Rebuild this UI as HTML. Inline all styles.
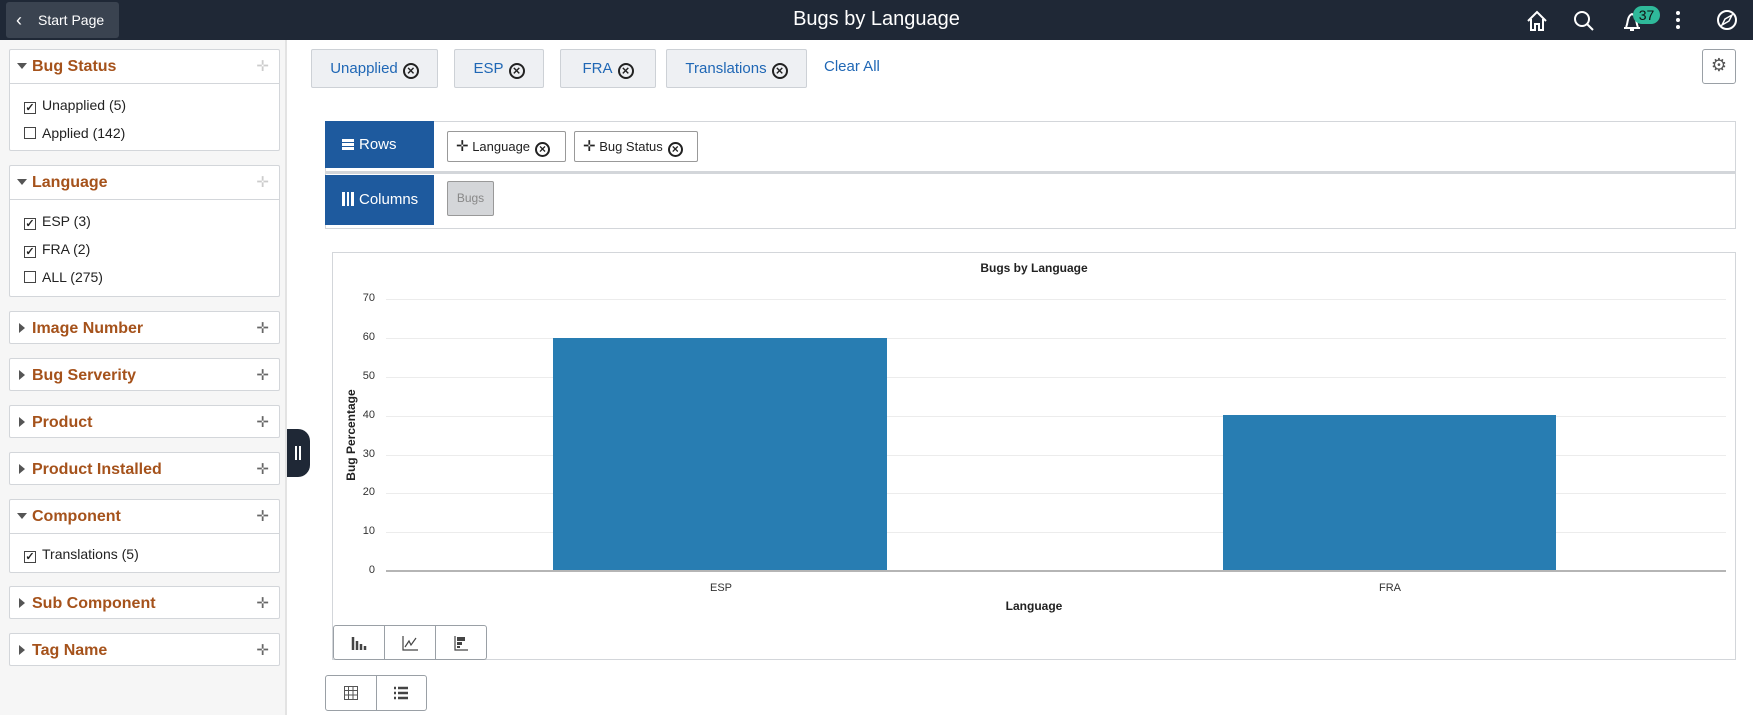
<!DOCTYPE html>
<html><head><meta charset="utf-8"><style>
*{box-sizing:border-box;margin:0;padding:0}
body{width:1753px;height:715px;position:relative;overflow:hidden;background:#fff;font-family:"Liberation Sans",Arial,sans-serif;color:#222}
.a{position:absolute}
#hdr{left:0;top:0;width:1753px;height:40px;background:#1f2836}
#sp{left:6px;top:2px;width:113px;height:36px;background:#3a4350;border-radius:3px;color:#fff;font-size:14px;line-height:36px;padding-left:32px}
#title{left:0;width:1753px;top:8px;text-align:center;color:#fff;font-size:20px}
#side{left:0;top:40px;width:287px;height:675px;background:#f6f6f6;border-right:2px solid #e3e3e3}
.pn{position:absolute;left:9px;width:271px;background:#fff;border:1px solid #d3d6da;border-radius:2px}
.ph{height:33px;position:relative;font-weight:bold;color:#a5521b;font-size:16px;line-height:33px;padding-left:22px}
.pb{border-top:1px solid #d3d6da;position:relative}
.tri{position:absolute;left:7px;top:13px;width:0;height:0;border-left:5px solid transparent;border-right:5px solid transparent;border-top:6px solid #555}
.trr{position:absolute;left:9px;top:11px;width:0;height:0;border-top:5px solid transparent;border-bottom:5px solid transparent;border-left:6px solid #555}
.mv{position:absolute;right:10px;top:9px;color:#666;font-size:15px;line-height:15px;font-weight:normal}
.it{position:absolute;left:14px;font-size:14px;color:#222;line-height:16px}
.cb{display:inline-block;width:12px;height:12px;border:1px solid #444;vertical-align:-1px;margin-right:6px;font-size:11px;line-height:10px;text-align:center;font-weight:bold}
#tab{left:287px;top:429px;width:23px;height:48px;background:#1f2836;border-radius:0 12px 12px 0}
.chip{position:absolute;top:49px;height:39px;background:#eef0f3;border:1px solid #cdd1d6;border-radius:2px;color:#1f67b5;font-size:15px;line-height:37px;text-align:center}
.x{display:inline-block;width:16px;height:16px;border:2px solid #222;border-radius:50%;font-size:13px;line-height:12px;color:#222;font-weight:bold;text-align:center;vertical-align:-2px;margin-left:5px}
.blk{position:absolute;left:325px;width:109px;background:#1e5a9e;color:#fff;font-size:15px;padding-left:17px}
.fc{position:absolute;top:131px;height:31px;border:1px solid #999;border-radius:2px;font-size:13px;line-height:29px;padding-left:8px;background:#fff}
.fc .x{width:15px;height:15px;font-size:12px;line-height:11px}
.yl{position:absolute;left:355px;width:20px;text-align:right;font-size:11px;color:#333}
.gl{position:absolute;left:386px;width:1340px;height:1px;background:#ececec}
.bt{position:absolute;border:1px solid #9aa0a6;border-radius:3px;background:#fff;display:flex}
.bt div{flex:1;border-right:1px solid #9aa0a6;display:flex;align-items:center;justify-content:center}
.bt div:last-child{border-right:none}
</style></head><body>
<div id="hdr" class="a"></div>
<div id="sp" class="a"><span style="position:absolute;left:10px;top:0;font-size:18px">&#8249;</span>Start Page</div>
<div id="title" class="a">Bugs by Language</div>
<svg class="a" style="left:1525px;top:8px" width="228" height="26" viewBox="0 0 228 26" fill="none" stroke="#fff" stroke-width="2">
<path d="M3 13 L12 4 L21 13 M6 11 V22 H10 V16 H14 V22 H18 V11"/>
<circle cx="57" cy="11" r="7"/><path d="M62 16 L68 22"/>
<path d="M99 20 H115 M101 19 C103 16 102 8 107 6 C112 8 111 16 113 19 M105 22 H109"/>
<circle cx="153" cy="5" r="2" fill="#fff" stroke="none"/><circle cx="153" cy="12" r="2" fill="#fff" stroke="none"/><circle cx="153" cy="19" r="2" fill="#fff" stroke="none"/>
<circle cx="202" cy="12" r="9"/><path d="M197 17 L200 11 L207 7 L204 13 Z" stroke-width="1.5"/>
</svg>
<div class="a" style="left:1633px;top:6px;width:27px;height:18px;background:#2fb99a;border-radius:9px;font-size:14px;line-height:18px;text-align:center;color:#111">37</div>

<div id="side" class="a"></div>
<div class="pn" style="top:49px;height:102px"><div class="ph"><i class="tri"></i>Bug Status<span class="mv" style="color:#ccc">&#10011;</span></div><div class="pb" style="height:68px"><div class="it" style="top:13px"><span class="cb">&#10003;</span>Unapplied (5)</div><div class="it" style="top:41px"><span class="cb"></span>Applied (142)</div></div></div>
<div class="pn" style="top:165px;height:132px"><div class="ph"><i class="tri"></i>Language<span class="mv" style="color:#ccc">&#10011;</span></div><div class="pb" style="height:98px"><div class="it" style="top:13px"><span class="cb">&#10003;</span>ESP (3)</div><div class="it" style="top:41px"><span class="cb">&#10003;</span>FRA (2)</div><div class="it" style="top:69px"><span class="cb"></span>ALL (275)</div></div></div>
<div class="pn" style="top:311px;height:33px"><div class="ph"><i class="trr"></i>Image Number<span class="mv">&#10011;</span></div></div>
<div class="pn" style="top:358px;height:33px"><div class="ph"><i class="trr"></i>Bug Serverity<span class="mv">&#10011;</span></div></div>
<div class="pn" style="top:405px;height:33px"><div class="ph"><i class="trr"></i>Product<span class="mv">&#10011;</span></div></div>
<div class="pn" style="top:452px;height:33px"><div class="ph"><i class="trr"></i>Product Installed<span class="mv">&#10011;</span></div></div>
<div class="pn" style="top:499px;height:74px"><div class="ph"><i class="tri"></i>Component<span class="mv">&#10011;</span></div><div class="pb" style="height:40px"><div class="it" style="top:12px"><span class="cb">&#10003;</span>Translations (5)</div></div></div>
<div class="pn" style="top:586px;height:33px"><div class="ph"><i class="trr"></i>Sub Component<span class="mv">&#10011;</span></div></div>
<div class="pn" style="top:633px;height:33px"><div class="ph"><i class="trr"></i>Tag Name<span class="mv">&#10011;</span></div></div>
<div id="tab" class="a"><div class="a" style="left:8px;top:17px;width:2px;height:14px;background:#fff"></div><div class="a" style="left:12px;top:17px;width:2px;height:14px;background:#fff"></div></div>

<div class="chip" style="left:311px;width:127px">Unapplied<span class="x">×</span></div>
<div class="chip" style="left:454px;width:90px">ESP<span class="x">×</span></div>
<div class="chip" style="left:560px;width:96px">FRA<span class="x">×</span></div>
<div class="chip" style="left:666px;width:141px">Translations<span class="x">×</span></div>
<div class="a" style="left:824px;top:58px;color:#1f67b5;font-size:15px">Clear All</div>
<div class="a" style="left:1702px;top:49px;width:34px;height:35px;border:1px solid #9aa0a6;border-radius:3px;color:#555;font-size:18px;text-align:center;line-height:32px;font-family:'DejaVu Sans',sans-serif">&#9881;</div>

<div class="a" style="left:325px;top:121px;width:1411px;height:108px;border:1px solid #d3d6da"></div>
<div class="a" style="left:325px;top:171px;width:1411px;height:3px;background:#d3d6da"></div>
<div class="blk" style="top:121px;height:47px;line-height:47px"><span style="display:inline-block;width:12px;height:11px;border-top:3px solid #fff;border-bottom:3px solid #fff;position:relative;vertical-align:-1px;margin-right:5px"><i style="position:absolute;left:0;top:1px;width:12px;height:3px;background:#fff"></i></span>Rows</div>
<div class="blk" style="top:175px;height:50px;line-height:50px"><span style="display:inline-block;width:12px;height:14px;border-left:3px solid #fff;border-right:3px solid #fff;position:relative;vertical-align:-2px;margin-right:5px"><i style="position:absolute;left:2px;top:0;width:2px;height:14px;background:#fff"></i></span>Columns</div>
<div class="fc" style="left:447px;width:119px"><span style="font-size:15px">&#10011;</span> Language<span class="x">×</span></div>
<div class="fc" style="left:574px;width:124px"><span style="font-size:15px">&#10011;</span> Bug Status<span class="x">×</span></div>
<div class="a" style="left:447px;top:181px;width:47px;height:35px;background:#d4d6d9;border:1px solid #999;border-radius:2px;color:#888;font-size:12px;text-align:center;line-height:33px">Bugs</div>

<div class="a" style="left:332px;top:252px;width:1404px;height:408px;border:1px solid #d3d6da"></div>
<div class="a" style="left:332px;top:261px;width:1404px;text-align:center;font-weight:bold;font-size:12px">Bugs by Language</div>
<div class="gl" style="top:299px"></div><div class="gl" style="top:338px"></div><div class="gl" style="top:377px"></div><div class="gl" style="top:416px"></div><div class="gl" style="top:455px"></div><div class="gl" style="top:493px"></div><div class="gl" style="top:532px"></div>
<div class="a" style="left:386px;top:570px;width:1340px;height:2px;background:#b5b5b5"></div>
<div class="yl" style="top:292px">70</div><div class="yl" style="top:331px">60</div><div class="yl" style="top:370px">50</div><div class="yl" style="top:409px">40</div><div class="yl" style="top:448px">30</div><div class="yl" style="top:486px">20</div><div class="yl" style="top:525px">10</div><div class="yl" style="top:564px">0</div>
<div class="a" style="left:553px;top:338px;width:334px;height:232px;background:#287db2"></div>
<div class="a" style="left:1223px;top:415px;width:333px;height:155px;background:#287db2"></div>
<div class="a" style="left:700px;top:582px;width:42px;text-align:center;font-size:11px;color:#333">ESP</div>
<div class="a" style="left:1369px;top:582px;width:42px;text-align:center;font-size:11px;color:#333">FRA</div>
<div class="a" style="left:332px;top:599px;width:1404px;text-align:center;font-weight:bold;font-size:12px">Language</div>
<div class="a" style="left:291px;top:428px;width:120px;text-align:center;font-weight:bold;font-size:12px;transform:rotate(-90deg)">Bug Percentage</div>

<div class="bt" style="left:333px;top:625px;width:154px;height:35px">
<div><svg width="16" height="16"><path d="M2 2V15M6 6V15M10 9V15M14 11V15" stroke="#444" stroke-width="2.5"/></svg></div>
<div><svg width="18" height="16"><path d="M2 1V15H17M4 12L8 6L10 10L15 3" stroke="#444" stroke-width="1.2" fill="none"/></svg></div>
<div><svg width="16" height="16"><path d="M2 1V15H15" stroke="#444" stroke-width="1.2" fill="none"/><rect x="4" y="2" width="8" height="4" fill="#444"/><rect x="4" y="7" width="5" height="3" fill="#444"/><rect x="4" y="11" width="3" height="2" fill="#444"/></svg></div>
</div>
<div class="bt" style="left:325px;top:675px;width:102px;height:36px">
<div><svg width="16" height="16"><path d="M1.5 1.5H14.5V14.5H1.5ZM1.5 5.5H14.5M1.5 10H14.5M5.5 1.5V14.5M10 1.5V14.5" stroke="#555" fill="none"/></svg></div>
<div><svg width="16" height="16"><path d="M1 3H3M1 8H3M1 13H3M5 3H15M5 8H15M5 13H15" stroke="#444" stroke-width="2.4"/></svg></div>
</div>
</body></html>
